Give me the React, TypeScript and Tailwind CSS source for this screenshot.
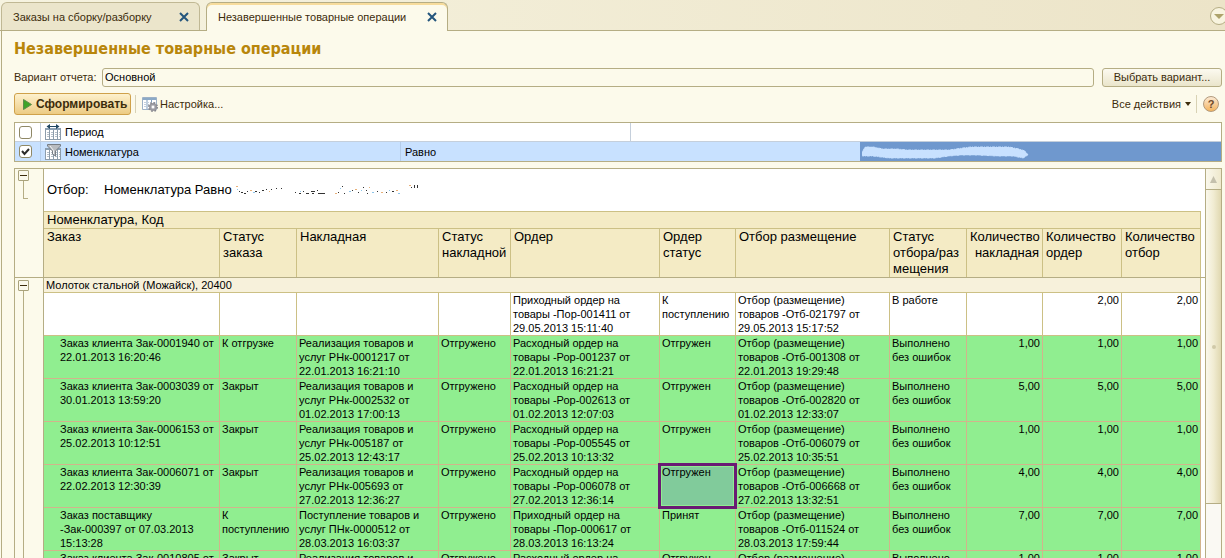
import React from 'react';

const COLS = [176, 77, 142, 72, 149, 76, 154, 77, 76, 79, 79];

const HEADERS = [
  'Заказ',
  'Статус\nзаказа',
  'Накладная',
  'Статус\nнакладной',
  'Ордер',
  'Ордер\nстатус',
  'Отбор размещение',
  'Статус\nотбора/раз\nмещения',
  'Количество\nнакладная',
  'Количество\nордер',
  'Количество\nотбор',
];

const ROWS = [
  ['', '', '', '', 'Приходный ордер на\nтовары -Пор-001411 от\n29.05.2013 15:11:40', 'К\nпоступлению', 'Отбор (размещение)\nтоваров -Отб-021797 от\n29.05.2013 15:17:52', 'В работе', '', '2,00', '2,00'],
  ['Заказ клиента Зак-0001940 от\n22.01.2013 16:20:46', 'К отгрузке', 'Реализация товаров и\nуслуг РНк-0001217 от\n22.01.2013 16:21:10', 'Отгружено', 'Расходный ордер на\nтовары -Рор-001237 от\n22.01.2013 16:21:21', 'Отгружен', 'Отбор (размещение)\nтоваров -Отб-001308 от\n22.01.2013 19:29:48', 'Выполнено\nбез ошибок', '1,00', '1,00', '1,00'],
  ['Заказ клиента Зак-0003039 от\n30.01.2013 13:59:20', 'Закрыт', 'Реализация товаров и\nуслуг РНк-0002532 от\n01.02.2013 17:00:13', 'Отгружено', 'Расходный ордер на\nтовары -Рор-002613 от\n01.02.2013 12:07:03', 'Отгружен', 'Отбор (размещение)\nтоваров -Отб-002820 от\n01.02.2013 12:33:07', 'Выполнено\nбез ошибок', '5,00', '5,00', '5,00'],
  ['Заказ клиента Зак-0006153 от\n25.02.2013 10:12:51', 'Закрыт', 'Реализация товаров и\nуслуг РНк-005187 от\n25.02.2013 12:43:17', 'Отгружено', 'Расходный ордер на\nтовары -Рор-005545 от\n25.02.2013 10:13:32', 'Отгружен', 'Отбор (размещение)\nтоваров -Отб-006079 от\n25.02.2013 10:35:51', 'Выполнено\nбез ошибок', '1,00', '1,00', '1,00'],
  ['Заказ клиента Зак-0006071 от\n22.02.2013 12:30:39', 'Закрыт', 'Реализация товаров и\nуслуг РНк-005693 от\n27.02.2013 12:36:27', 'Отгружено', 'Расходный ордер на\nтовары -Рор-006078 от\n27.02.2013 12:36:14', 'Отгружен', 'Отбор (размещение)\nтоваров -Отб-006668 от\n27.02.2013 13:32:51', 'Выполнено\nбез ошибок', '4,00', '4,00', '4,00'],
  ['Заказ поставщику\n-Зак-000397 от 07.03.2013\n15:13:28', 'К\nпоступлению', 'Поступление товаров и\nуслуг ПНк-0000512 от\n28.03.2013 16:03:37', 'Отгружено', 'Приходный ордер на\nтовары -Пор-000617 от\n28.03.2013 16:13:24', 'Принят', 'Отбор (размещение)\nтоваров -Отб-011524 от\n28.03.2013 17:59:44', 'Выполнено\nбез ошибок', '7,00', '7,00', '7,00'],
  ['Заказ клиента Зак-0010805 от', 'Закрыт', 'Реализация товаров и', 'Отгружено', 'Расходный ордер на', 'Отгружен', 'Отбор (размещение)', 'Выполнено\nбез ошибок', '1,00', '1,00', '1,00'],
];

const SELECTED = { row: 4, col: 5 };

const ColGroup: React.FC = () => (
  <colgroup>
    {COLS.map((w, i) => (
      <col key={i} style={{ width: w }} />
    ))}
  </colgroup>
);

const CloseIcon: React.FC = () => (
  <svg width="10" height="10" viewBox="0 0 10 10" aria-hidden="true">
    <path d="M1 1l8 8M9 1l-8 8" stroke="#24557d" strokeWidth="2" />
  </svg>
);

const Grid: React.FC = () => (
  <>
    <path d="M0 4h16v12H0z" fill="#fff" />
    <path d="M0 4h16v2H0z" fill="#8ba0b3" />
    <path d="M.5 4v12M4.500 6v10M8.500 6v10M12.500 6v10M15.500 4v12M0 15.500h16" stroke="#8c9cab" />
    <path d="M2 8.500h13M2 10.500h13M2 12.500h13" stroke="#b4bec8" strokeDasharray="2 2" />
  </>
);

const PeriodIcon: React.FC = () => (
  <svg width="16" height="16" viewBox="0 0 16 16" aria-hidden="true">
    <Grid />
    <path d="M2 2.500h12" stroke="#1f4660" />
    <path d="M5 0v5L1.500 2.500zM11 0v5l3.500-2.500z" fill="#1f4660" />
  </svg>
);

const FilterIcon: React.FC = () => (
  <svg width="16" height="16" viewBox="0 0 16 16" aria-hidden="true">
    <Grid />
    <path d="M2.500 .5h13v1.500L10.500 7v5l-3-2V7L2.500 2z" fill="#b9bcc0" stroke="#777d84" />
    <path d="M5 2l3.500 4.500V10" fill="none" stroke="#f2f3f4" />
  </svg>
);

const SettingsIcon: React.FC = () => (
  <svg width="16" height="16" viewBox="0 0 16 16" aria-hidden="true">
    <path d="M.5 1.500h14v12H.5z" fill="#fff" stroke="#9db1c6" />
    <path d="M1 2h13v2H1z" fill="#8ba9c6" />
    <path d="M5 4v9M9.500 4v9" stroke="#7d9dbd" />
    <path d="M2 6.500h11M2 8.500h11M2 10.500h11" stroke="#c3d0de" strokeDasharray="2 1" />
    <circle cx="11" cy="11" r="3" fill="#c4c4c8" stroke="#9a9aa1" strokeWidth="2" />
    <circle cx="11" cy="11" r="4.300" fill="none" stroke="#85858c" strokeWidth="1.400" strokeDasharray="1.700 1.700" />
    <circle cx="11" cy="11" r="1.200" fill="#fff" />
  </svg>
);

const ErasedValue: React.FC = () => (
  <svg width="184" height="12" viewBox="0 0 184 12" aria-hidden="true" fill="none" strokeWidth="1">
    <path d="M5 7.500h1M7 8.500h2M10 9.500h2M13 7.500h1M21 7.500h2M25 8.500h1M28 6.500h2M32 5.500h1M37 5.500h1M42 4.500h1M47 4.500h1M61 8.500h1M65 9.500h2M69 7.500h1M72 9.500h3M77 7.500h4M78 9.500h2M83 6.500h1M84 9.500h7M104 8.500h1M108 2.500h1M110 9.500h1M118 6.500h1M124 8.500h1M129 3.500h1M132 6.500h1M133 9.500h1M143 7.500h1M152 8.500h1M158 7.500h2M177 3.500h1" stroke="#333" />
    <path d="M2 2.500h2M16 6.500h2M35 7.500h1M101 9.500h2M121 5.500h2M135 3.500h1M147 8.500h2M162 6.500h2M175 1.500h2" stroke="#e8b078" />
    <path d="M3 5.500h1M19 8.500h2M66 7.500h1M106 4.500h1M115 7.500h2M127 6.500h1M138 8.500h2M155 6.500h1M164 9.500h2" stroke="#8ec5ea" />
    <path d="M180.500 1v3M183.500 1v3" stroke="#333" />
  </svg>
);

const Collapse: React.FC = () => (
  <button aria-label="Свернуть" className="flex h-[11px] w-[11px] shrink-0 items-center justify-center rounded-[1px] border border-[#a9a27c] bg-[#fbf9ec]">
    <span className="h-px w-[7px] bg-[#3c2c0c]"></span>
  </button>
);

const Tabs: React.FC = () => (
  <div className="flex h-[31px] items-end border-b border-[#b5ad84] bg-gradient-to-r from-[#f6f3e0] to-[#ece4c8] pl-px">
    <button className="flex h-[28px] w-[199px] items-center justify-between rounded-t-md border border-b-0 border-[#c0b894] bg-[#ebe5cb] pr-[10px] pl-[11px]">
      Заказы на сборку/разборку
      <CloseIcon />
    </button>
    <button className="-mb-px ml-[6px] flex h-[29px] w-[242px] items-center justify-between rounded-t-md border border-b-0 border-[#b5ad84] bg-[#fcfaeb] pr-[10px] pl-[11px] shadow-[inset_0_2px_0_#f7dc9c]">
      Незавершенные товарные операции
      <CloseIcon />
    </button>
    <button aria-label="Список окон" className="-mr-[3px] mb-[5px] ml-auto flex h-[18px] w-[18px] items-center justify-center rounded-full border border-[#b5ad84] bg-[#f8f4df]">
      <svg width="10" height="5" viewBox="0 0 10 5" aria-hidden="true">
        <path d="M0 0h10L5 5z" fill="#aea36b" />
      </svg>
    </button>
  </div>
);

const Toolbar: React.FC = () => (
  <>
    <div className="mt-[8px] flex h-5 items-center">
      <label htmlFor="variant" className="w-[88px]">Вариант отчета:</label>
      <input id="variant" defaultValue="Основной" className="mr-2 h-[19px] min-w-0 flex-1 rounded-[3px] border border-[#b5ad84] bg-[#fcfaeb] px-[2px] text-black" />
      <button className="h-[19px] w-[120px] rounded-[3px] border border-[#b5ad84] bg-gradient-to-b from-[#fcfaf0] to-[#eae5cb]">Выбрать вариант...</button>
    </div>
    <div className="mt-[6px] flex h-[22px] items-center">
      <button className="flex h-[22px] w-[117px] items-center gap-[4px] rounded-[3px] border border-[#cfa14a] bg-gradient-to-b from-[#fdf1cd] to-[#eccb83] pl-[8px] text-[12px] font-bold">
        <svg width="9" height="11" viewBox="0 0 9 11" aria-hidden="true">
          <path d="M.5 .5v10l8-5z" fill="#3fa428" stroke="#5f8a4c" />
        </svg>
        Сформировать
      </button>
      <span className="ml-1 h-[18px] w-px bg-[#d8d2b4]"></span>
      <button className="ml-[6px] flex items-center gap-[2px]">
        <SettingsIcon />
        Настройка...
      </button>
      <button className="ml-auto flex items-center gap-[4px]">
        Все действия
        <svg width="6" height="4" viewBox="0 0 6 4" aria-hidden="true">
          <path d="M0 0h6L3 4z" fill="#3c2c0c" />
        </svg>
      </button>
      <span className="ml-[5px] h-[18px] w-px bg-[#d8d2b4]"></span>
      <button aria-label="Справка" className="mr-[3px] ml-[6px] flex h-4 w-4 items-center justify-center rounded-full border border-[#b39a7c] bg-gradient-to-b from-[#fbe9d2] to-[#f3b45c] font-bold text-[#6e4a2a]">?</button>
    </div>
  </>
);

const Filters: React.FC = () => (
  <table className="mt-[7px] w-full table-fixed border-separate border-spacing-0 border border-[#b5ad84] bg-white text-black">
    <colgroup>
      <col className="w-[26px]" />
      <col className="w-[360px]" />
      <col className="w-[230px]" />
      <col className="w-[229px]" />
      <col />
    </colgroup>
    <tbody>
      <tr className="h-[19px]">
        <td className="border-r border-b border-[#c5cfdb] p-0">
          <input id="period" type="checkbox" className="ml-[4px] block h-[13px] w-[13px] appearance-none rounded-[3px] border border-[#8f8866] bg-white" />
        </td>
        <td colSpan={2} className="border-r border-b border-[#c5cfdb] p-0">
          <label htmlFor="period" className="flex items-center gap-1 pl-1">
            <PeriodIcon />
            Период
          </label>
        </td>
        <td colSpan={2} className="border-b border-[#c5cfdb] p-0"></td>
      </tr>
      <tr className="h-[19px] bg-[#c8e1ff]">
        <td className="border-r border-[#b5cdea] p-0">
          <div className="relative ml-[4px] h-[13px] w-[13px]">
            <input id="item" type="checkbox" defaultChecked className="block h-[13px] w-[13px] appearance-none rounded-[3px] border border-[#8f8866] bg-white" />
            <svg className="pointer-events-none absolute inset-0" width="13" height="13" viewBox="0 0 13 13" aria-hidden="true">
              <path d="M3 6l2.500 3L10 4" fill="none" stroke="#2b2b2b" strokeWidth="2" />
            </svg>
          </div>
        </td>
        <td className="border-r border-[#b5cdea] p-0">
          <label htmlFor="item" className="flex items-center gap-1 pl-1">
            <FilterIcon />
            Номенклатура
          </label>
        </td>
        <td colSpan={2} className="p-0 pl-1">Равно</td>
        <td className="bg-[#6f98ce] p-0 pl-[2px]">
          <svg className="block" width="168" height="14" viewBox="0 0 168 14" aria-hidden="true">
            <path d="M1 6l2-4 8 0 10 2 14 0 10 1 20 0 22 0 14-2 8-1 20 0 18 0 10 2 6 2 3 4-5 3-10-2-16 0-20-1-16 0-12 1-14 2-26 0-20 0-16-2-10 0-5-2z" fill="#c8e1ff" stroke="#c8e1ff" strokeDasharray="3 1 1 1" />
          </svg>
        </td>
      </tr>
    </tbody>
  </table>
);

const Report: React.FC = () => (
  <div className="mt-[6px] flex min-h-0 flex-1 border border-b-0 border-[#b5ad84] text-black">
    <div className="flex min-w-0 flex-1 flex-col overflow-hidden bg-white">
      <div className="flex border-b border-[#b5ad84]">
        <div className="flex w-[29px] flex-col border-r border-[#b5ad84] bg-[#fcfaeb] pt-px pl-[3px]">
          <Collapse />
          <span className="ml-[5px] h-[18px] w-[5px] border-b border-l border-[#b5ad84]"></span>
        </div>
        <div className="min-w-0 flex-1 pr-1 text-[13px] leading-4">
          <div className="flex h-[42px] items-center pl-[3px]">
            <span className="w-[57px]">Отбор:</span>
            <span className="mr-[2px]">Номенклатура Равно</span>
            <ErasedValue />
          </div>
          <table className="w-full table-fixed border-separate border-spacing-0 bg-[#f4ebc5]">
            <ColGroup />
            <thead>
              <tr>
                <th colSpan={11} className="border-t border-r border-b border-[#ccc085] p-0 pl-[3px] text-left font-normal">Номенклатура, Код</th>
              </tr>
              <tr className="h-12">
                {HEADERS.map((h, i) => (
                  <th key={i} className={`border-r border-[#ccc085] p-0 pl-[3px] align-top font-normal whitespace-pre ${i === 8 ? 'pr-[3px] text-right' : 'text-left'}`}>{h}</th>
                ))}
              </tr>
            </thead>
          </table>
        </div>
      </div>
      <div className="flex min-h-0 flex-1">
        <div className="flex w-[29px] flex-col border-r border-[#b5ad84] bg-[#fcfaeb] pt-[2px] pl-[3px]">
          <Collapse />
          <span className="ml-[5px] w-px flex-1 bg-[#b5ad84]"></span>
        </div>
        <div className="min-w-0 flex-1 pr-1 text-[11px] leading-[14px]">
          <table className="w-full table-fixed border-separate border-spacing-0">
            <ColGroup />
            <tbody>
              <tr>
                <td colSpan={11} className="border-r border-b border-[#ccc085] bg-[#f7f1db] p-0 pl-[2px]">Молоток стальной (Можайск), 20400</td>
              </tr>
              {ROWS.map((row, r) => (
                <tr key={r} className={`h-[43px] ${r > 0 ? 'bg-[#90ee90]' : 'bg-white'}`}>
                  {row.map((text, c) => {
                    const selected = r === SELECTED.row && c === SELECTED.col;
                    return (
                      <td key={c} className={`border-r border-b p-0 align-top whitespace-pre ${r > 0 ? 'border-[#d2b48c]' : 'border-[#ccc085]'} ${selected ? 'relative z-10' : ''} ${c > 7 ? 'pr-[2px] text-right' : c === 0 ? 'pl-4' : 'pl-[2px]'}`}>
                        {selected && <div className="absolute -inset-[2px] border-3 border-[#6a1b74] bg-[#81cb9b] shadow-[inset_0_0_0_1px_#90ee90]"></div>}
                        <span className="relative">{text}</span>
                      </td>
                    );
                  })}
                </tr>
              ))}
            </tbody>
          </table>
        </div>
      </div>
    </div>
    <div className="flex w-4 flex-col border-l border-[#b5ad84] bg-[#faf9f3]">
      <button aria-label="Вверх" className="flex h-[21px] items-center justify-center border-b border-[#b5ad84] bg-gradient-to-r from-[#faf8ec] to-[#efe9cd]">
        <svg width="7" height="7" viewBox="0 0 7 7" aria-hidden="true">
          <path d="M3.500 0L7 7H0z" fill="#c4c0ac" />
        </svg>
      </button>
      <div className="flex h-[314px] items-center justify-center border-b border-[#b5ad84] bg-gradient-to-r from-[#faf8ec] via-[#f1ecd2] to-[#e0d8b0]">
        <span className="h-1 w-1 rounded-full bg-[#d0c9a8]"></span>
      </div>
    </div>
  </div>
);

const App: React.FC = () => {
  return (
    <div className="flex h-screen flex-col overflow-hidden bg-[#fcfaeb] font-['Liberation_Sans',Arial,sans-serif] text-[11px] leading-4 text-[#3c2c0c]">
      <Tabs />
      <main className="ml-px flex min-h-0 flex-1 flex-col border-l border-[#b5ad84] pr-[3px] pl-3">
        <h1 className="mt-2 font-['DejaVu_Sans_Condensed','DejaVu_Sans',sans-serif] text-[16px] leading-5 font-bold text-[#b8860b]">Незавершенные товарные операции</h1>
        <Toolbar />
        <Filters />
        <Report />
      </main>
    </div>
  );
};

export default App;
